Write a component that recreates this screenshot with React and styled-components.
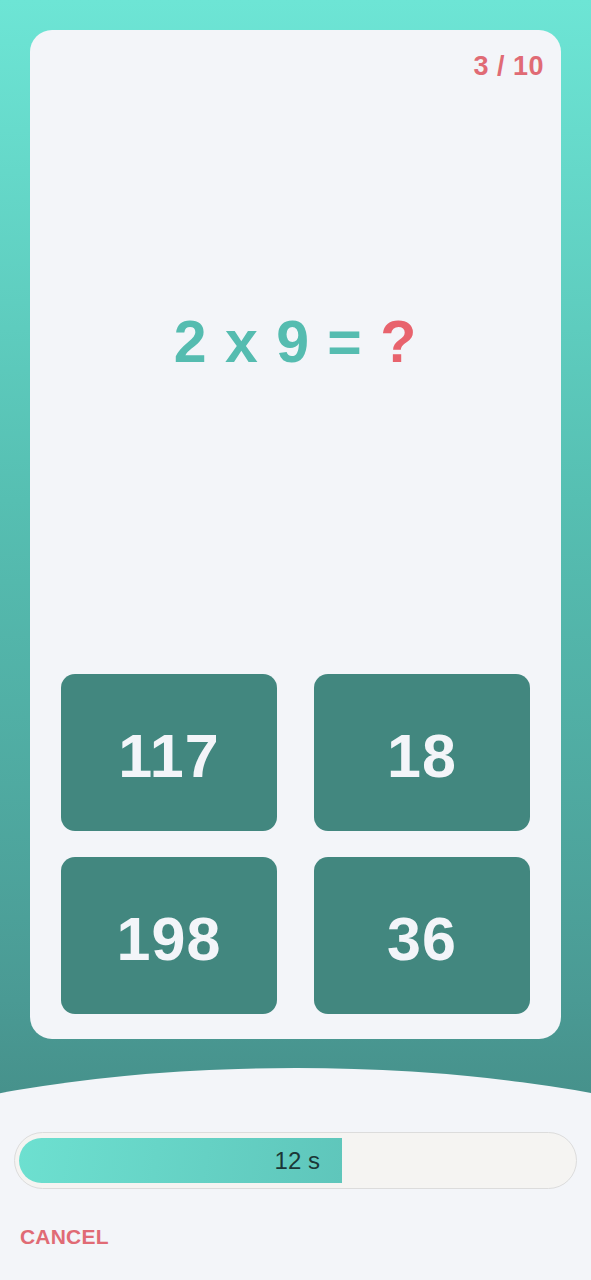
import React from 'react';
import styled, { createGlobalStyle } from 'styled-components';

const GlobalStyle = createGlobalStyle`
  html, body {
    margin: 0;
    padding: 0;
    background: #f3f5f9;
  }
  body {
    font-family: "Liberation Sans", Arial, sans-serif;
  }
`;

const Page = styled.div`
  position: relative;
  display: flex;
  flex-direction: column;
  min-height: 1280px;
  overflow: hidden;
  background: linear-gradient(180deg, #6de5d5 0px, #56bfb2 500px, #4a9a94 1000px, #46918b 1100px, #46918b 100%);
`;

const Card = styled.div`
  display: flex;
  flex-direction: column;
  margin: 30px 30px 0;
  height: 1009px;
  box-sizing: border-box;
  padding: 21px 17px 25px 31px;
  background: #f3f5f9;
  border-radius: 22px;
`;

const Counter = styled.div`
  align-self: flex-end;
  font-size: 27px;
  font-weight: 700;
  letter-spacing: 0.5px;
  color: #e06b75;
  line-height: 30px;
`;

const Question = styled.div`
  margin-top: 228px;
  text-align: center;
  padding-right: 14px;
  font-size: 59px;
  font-weight: 700;
  line-height: 66px;
  color: #55bcb0;
  letter-spacing: 1px;
`;

const Unknown = styled.span`
  color: #e8636d;
`;

const Answers = styled.div`
  margin-top: auto;
  margin-right: 14px;
  display: grid;
  grid-template-columns: 216px 216px;
  grid-auto-rows: 157px;
  column-gap: 37px;
  row-gap: 26px;
`;

const AnswerButton = styled.button`
  display: flex;
  align-items: center;
  justify-content: center;
  border: none;
  border-radius: 14px;
  background: #42877f;
  color: #f3f5f9;
  font-family: "Liberation Sans", Arial, sans-serif;
  font-size: 61px;
  font-weight: 700;
  letter-spacing: 1px;
  cursor: pointer;
  padding: 6px 0 0;
`;

const Footer = styled.div`
  position: relative;
  flex: 1;
  margin-top: 29px;
  padding: 64px 14px 0;
  display: flex;
  flex-direction: column;

  &::before {
    content: "";
    position: absolute;
    left: -295px;
    top: 0;
    width: 1182px;
    height: 374px;
    border-radius: 50%;
    background: #f3f5f9;
  }
  &::after {
    content: "";
    position: absolute;
    left: 0;
    right: 0;
    top: 187px;
    bottom: 0;
    background: #f3f5f9;
  }
`;

const Track = styled.div`
  position: relative;
  z-index: 1;
  height: 57px;
  box-sizing: border-box;
  padding: 5px 4px;
  border: 1.5px solid #dcdcdc;
  border-radius: 29px;
  background: #f5f4f2;
`;

const Fill = styled.div`
  height: 100%;
  display: flex;
  align-items: center;
  justify-content: flex-end;
  box-sizing: border-box;
  padding-right: 22px;
  border-radius: 23px 0 0 23px;
  background: linear-gradient(100deg, #6de0d0 0%, #5fc6bb 100%);
  font-size: 24px;
  color: #1b3636;
`;

const CancelButton = styled.button`
  position: relative;
  z-index: 1;
  align-self: flex-start;
  margin-top: 36px;
  margin-left: 6px;
  padding: 0;
  border: none;
  background: none;
  font-family: "Liberation Sans", Arial, sans-serif;
  font-size: 21px;
  font-weight: 700;
  letter-spacing: 0.2px;
  color: #e06b75;
  cursor: pointer;
`;

const answers = ['117', '18', '198', '36'];

export default function App() {
  const remaining = 12;
  const progress = 0.584;
  return (
    <>
      <GlobalStyle />
      <Page>
        <Card>
          <Counter>3 / 10</Counter>
          <Question>
            2 x 9 = <Unknown>?</Unknown>
          </Question>
          <Answers>
            {answers.map(a => (
              <AnswerButton key={a}>{a}</AnswerButton>
            ))}
          </Answers>
        </Card>
        <Footer>
          <Track>
            <Fill style={{ width: `${progress * 100}%` }}>{remaining} s</Fill>
          </Track>
          <CancelButton>CANCEL</CancelButton>
        </Footer>
      </Page>
    </>
  );
}
